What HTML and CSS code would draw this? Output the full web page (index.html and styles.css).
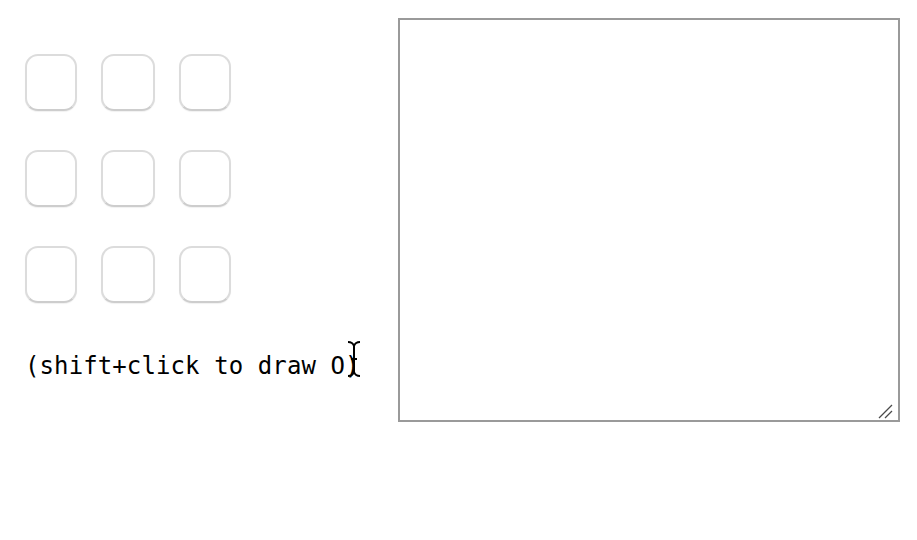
FILE: index.html
```html
<!DOCTYPE html>
<html>
<head>
<meta charset="utf-8">
<link rel="stylesheet" href="styles.css">
</head>
<body>
<div class="page">
  <div class="left">
    <div class="grid">
      <div class="cell"></div><div class="cell"></div><div class="cell"></div>
      <div class="cell"></div><div class="cell"></div><div class="cell"></div>
      <div class="cell"></div><div class="cell"></div><div class="cell"></div>
    </div>
    <p class="hint">(shift+click to draw O)<svg class="ibeam" width="16" height="38" viewBox="0 0 16 38"><path d="M2 2 C5 2 7 3 8 6 C9 3 11 2 14 2 M8 6 L8 32 C7 35 5 36 2 36 M8 32 C9 35 11 36 14 36 M5 19 L11 19" fill="none" stroke="#000" stroke-width="2"/></svg></p>
  </div>
  <div class="padwrap">
    <textarea class="pad"></textarea>
    <svg class="grip" width="16" height="16" viewBox="0 0 16 16"><path d="M1 15 L14 2 M7 15 L14 8" stroke="#4a4a4a" stroke-width="1.3" fill="none"/></svg>
  </div>
</div>
</body>
</html>
```
FILE: styles.css
```css
html, body {
  margin: 0;
  padding: 0;
  background: #fff;
}
.page {
  display: flex;
  align-items: flex-start;
  padding: 18px 0 0 25px;
}
.left {
  width: 373px;
  padding-top: 36px;
}
.grid {
  display: grid;
  grid-template-columns: 52px 54px 52px;
  column-gap: 24px;
  row-gap: 39px;
}
.cell {
  height: 57px;
  box-sizing: border-box;
  border: 2px solid #dcdcdc;
  border-bottom-color: #cdcdcd;
  border-radius: 13px;
  background: #fff;
  box-shadow: 0 1px 1px rgba(0, 0, 0, 0.06);
}
.hint {
  position: relative;
  margin: 49px 0 0 0;
  font-family: "DejaVu Sans Mono", "Liberation Mono", monospace;
  font-size: 24px;
  line-height: 28px;
  color: #000;
  letter-spacing: 0.1px;
}
.ibeam {
  position: absolute;
  left: 321px;
  top: -12px;
}
.padwrap {
  position: relative;
  width: 502px;
  height: 404px;
}
.pad {
  display: block;
  box-sizing: border-box;
  width: 502px;
  height: 404px;
  margin: 0;
  border: 2px solid #9a9a9a;
  background: #fff;
  resize: none;
  outline: none;
}
.grip {
  position: absolute;
  right: 6px;
  bottom: 3px;
}
```
